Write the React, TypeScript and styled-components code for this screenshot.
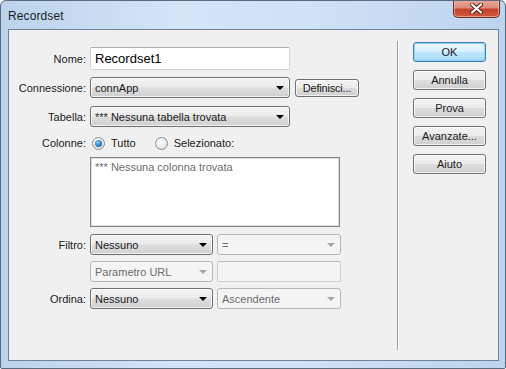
import styled, { createGlobalStyle } from "styled-components";

const GlobalStyle = createGlobalStyle`
  html, body {
    margin: 0;
    padding: 0;
    background: #ffffff;
  }
  body {
    font-family: "Liberation Sans", Arial, sans-serif;
    font-size: 11px;
    color: #1a1a1a;
  }
`;

const Window = styled.div`
  width: 506px;
  height: 369px;
  box-sizing: border-box;
  border: 1px solid #5b6b7d;
  border-radius: 6px 6px 2px 2px;
  background: linear-gradient(90deg, #bcd3ec 0%, #d3e5f7 35%, #cfe2f6 60%, #bdd4ee 100%);
  display: flex;
  flex-direction: column;
  overflow: hidden;
`;

const TitleBar = styled.div`
  height: 28px;
  display: flex;
  align-items: flex-start;
  justify-content: space-between;
  padding-left: 7px;
  padding-right: 5px;
`;

const Title = styled.span`
  margin-top: 8px;
  font-size: 12px;
  color: #1e1e1e;
  letter-spacing: 0.1px;
`;

const CloseButton = styled.div`
  width: 45px;
  height: 17px;
  margin-top: -1px;
  border: 1px solid #6b2a22;
  border-top: none;
  border-radius: 0 0 5px 5px;
  background: linear-gradient(#e9a99b 0%, #dc8c7b 45%, #c4412c 55%, #d05a3f 100%);
  box-shadow: inset 0 0 0 1px rgba(255, 210, 200, 0.55);
  display: flex;
  align-items: center;
  justify-content: center;
`;

const Client = styled.div`
  flex: 1;
  margin: 0 6px 7px 7px;
  border: 1px solid #6f8396;
  background: #f0f0f0;
  display: flex;
`;

const Form = styled.div`
  width: 388px;
  display: flex;
  flex-direction: column;
  padding-top: 17px;
`;

const Row = styled.div<{ $top: number; $h: number }>`
  display: flex;
  align-items: center;
  gap: 4px;
  margin-top: ${({ $top }) => $top}px;
  height: ${({ $h }) => $h}px;
`;

const Label = styled.span`
  width: 77px;
  text-align: right;
  white-space: nowrap;
`;

const Spacer = styled.span`
  width: 77px;
`;

const TextInput = styled.div<{ $w: number; $disabled?: boolean }>`
  width: ${({ $w }) => $w}px;
  height: 100%;
  box-sizing: border-box;
  border: 1px solid ${({ $disabled }) => ($disabled ? "#c9cbce" : "#d0d3d8")};
  border-top-color: ${({ $disabled }) => ($disabled ? "#b8bbbf" : "#abadb3")};
  border-radius: 2px;
  background: ${({ $disabled }) => ($disabled ? "#f4f4f4" : "#ffffff")};
  padding-left: 4px;
  display: flex;
  align-items: center;
  font-size: 13px;
  color: #000;
`;

const Combo = styled.div<{ $w: number; $disabled?: boolean }>`
  width: ${({ $w }) => $w}px;
  height: 100%;
  box-sizing: border-box;
  border: 1px solid ${({ $disabled }) => ($disabled ? "#b5b8bb" : "#707070")};
  border-radius: 3px;
  background: ${({ $disabled }) =>
    $disabled
      ? "#f4f4f4"
      : "linear-gradient(#f3f3f3 0%, #ebebeb 48%, #dedede 52%, #d0d0d0 100%)"};
  box-shadow: ${({ $disabled }) => ($disabled ? "none" : "inset 0 0 0 1px rgba(255,255,255,0.7)")};
  color: ${({ $disabled }) => ($disabled ? "#6d6d6d" : "#1a1a1a")};
  display: flex;
  align-items: center;
  justify-content: space-between;
  padding: 0 5px 0 4px;
  white-space: nowrap;
`;

const Arrow = styled.span<{ $disabled?: boolean }>`
  width: 0;
  height: 0;
  border-left: 4px solid transparent;
  border-right: 4px solid transparent;
  border-top: 4px solid ${({ $disabled }) => ($disabled ? "#a6a6a6" : "#000")};
  margin-top: 1px;
`;

const SmallButton = styled.div`
  margin-left: 1px;
  width: 64px;
  height: 18px;
  box-sizing: border-box;
  border: 1px solid #707070;
  border-radius: 3px;
  background: linear-gradient(#f2f2f2 0%, #ebebeb 48%, #dddddd 52%, #cfcfcf 100%);
  box-shadow: inset 0 0 0 1px rgba(255, 255, 255, 0.7);
  display: flex;
  align-items: center;
  justify-content: center;
  letter-spacing: -0.2px;
`;

const RadioGroup = styled.div`
  display: flex;
  align-items: center;
  margin-left: 2px;
`;

const Radio = styled.span<{ $checked?: boolean }>`
  width: 13px;
  height: 13px;
  box-sizing: border-box;
  border-radius: 50%;
  border: 1px solid #8f8f8f;
  background: radial-gradient(circle at 40% 35%, #ffffff 0%, #e6e6e6 60%, #d0d0d0 100%);
  display: flex;
  align-items: center;
  justify-content: center;
  margin-right: 6px;

  &::after {
    content: "";
    display: ${({ $checked }) => ($checked ? "block" : "none")};
    width: 7px;
    height: 7px;
    border-radius: 50%;
    background: radial-gradient(circle at 40% 35%, #8ad0f5 0%, #2a7cbf 55%, #10447a 100%);
  }
`;

const RadioText = styled.span<{ $gap?: number }>`
  margin-right: ${({ $gap }) => $gap ?? 0}px;
`;

const ListBox = styled.div`
  width: 250px;
  height: 100%;
  box-sizing: border-box;
  border: 1px solid #828790;
  box-shadow: inset 0 0 0 1px #dcdcdc;
  background: #fff;
  color: #6d6d6d;
  padding: 3px 4px;
  align-self: stretch;
`;

const Separator = styled.div`
  width: 1px;
  background: #a0a0a0;
  border-right: 1px solid #ffffff;
  margin: 11px 0 10px;
`;

const Buttons = styled.div`
  display: flex;
  flex-direction: column;
  gap: 8px;
  padding: 12px 0 0 14px;
`;

const DialogButton = styled.div<{ $default?: boolean }>`
  width: 73px;
  height: 20px;
  box-sizing: border-box;
  border: 1px solid ${({ $default }) => ($default ? "#3c7fb1" : "#707070")};
  border-radius: 3px;
  background: ${({ $default }) =>
    $default
      ? "linear-gradient(#eaf6fd 0%, #d9f0fc 48%, #bee6fd 52%, #a7d9f5 100%)"
      : "linear-gradient(#f2f2f2 0%, #ebebeb 48%, #dddddd 52%, #cfcfcf 100%)"};
  box-shadow: inset 0 0 0 1px ${({ $default }) => ($default ? "#8ed3f6" : "rgba(255,255,255,0.7)")};
  display: flex;
  align-items: center;
  justify-content: center;
`;

const Combobox = ({ w, text, disabled }: { w: number; text: string; disabled?: boolean }) => (
  <Combo $w={w} $disabled={disabled}>
    <span>{text}</span>
    <Arrow $disabled={disabled} />
  </Combo>
);

const App = () => (
  <>
    <GlobalStyle />
    <Window>
      <TitleBar>
        <Title>Recordset</Title>
        <CloseButton>
          <svg width="13" height="11" viewBox="0 0 13 11">
            <path
              d="M2 1.5 L11 9.5 M11 1.5 L2 9.5"
              stroke="#5a2018"
              strokeWidth="4"
              strokeLinecap="round"
            />
            <path
              d="M2 1.5 L11 9.5 M11 1.5 L2 9.5"
              stroke="#ffffff"
              strokeWidth="2.2"
              strokeLinecap="round"
            />
          </svg>
        </CloseButton>
      </TitleBar>
      <Client>
        <Form>
          <Row $top={0} $h={23}>
            <Label>Nome:</Label>
            <TextInput $w={200}>Recordset1</TextInput>
          </Row>
          <Row $top={7} $h={21}>
            <Label>Connessione:</Label>
            <Combobox w={200} text="connApp" />
            <SmallButton>Definisci...</SmallButton>
          </Row>
          <Row $top={8} $h={21}>
            <Label>Tabella:</Label>
            <Combobox w={200} text="*** Nessuna tabella trovata" />
          </Row>
          <Row $top={8} $h={16}>
            <Label>Colonne:</Label>
            <RadioGroup>
              <Radio $checked />
              <RadioText $gap={19}>Tutto</RadioText>
              <Radio />
              <RadioText>Selezionato:</RadioText>
            </RadioGroup>
          </Row>
          <Row $top={6} $h={70}>
            <Spacer />
            <ListBox>*** Nessuna colonna trovata</ListBox>
          </Row>
          <Row $top={7} $h={21}>
            <Label>Filtro:</Label>
            <Combobox w={123} text="Nessuno" />
            <Combobox w={124} text="=" disabled />
          </Row>
          <Row $top={6} $h={21}>
            <Spacer />
            <Combobox w={123} text="Parametro URL" disabled />
            <TextInput $w={124} $disabled />
          </Row>
          <Row $top={6} $h={21}>
            <Label>Ordina:</Label>
            <Combobox w={123} text="Nessuno" />
            <Combobox w={124} text="Ascendente" disabled />
          </Row>
        </Form>
        <Separator />
        <Buttons>
          <DialogButton $default>OK</DialogButton>
          <DialogButton>Annulla</DialogButton>
          <DialogButton>Prova</DialogButton>
          <DialogButton>Avanzate...</DialogButton>
          <DialogButton>Aiuto</DialogButton>
        </Buttons>
      </Client>
    </Window>
  </>
);

export default App;
